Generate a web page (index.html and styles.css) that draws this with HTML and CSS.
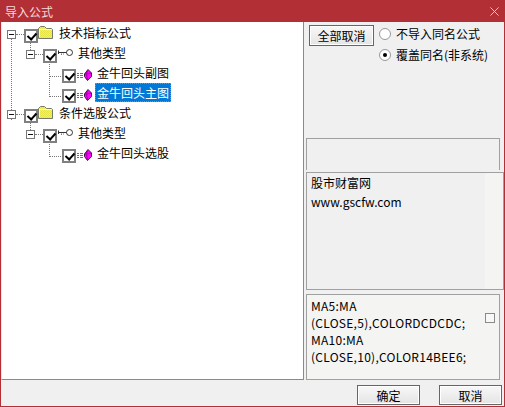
FILE: index.html
```html
<!DOCTYPE html>
<html lang="zh">
<head>
<meta charset="utf-8">
<title>导入公式</title>
<link rel="stylesheet" href="styles.css">
</head>
<body>
<svg class="defs" width="0" height="0" aria-hidden="true">
  <defs>
    <pattern id="dither" width="2" height="2" patternUnits="userSpaceOnUse">
      <rect width="2" height="2" fill="#ffff00"/>
      <rect width="1" height="1" fill="#e4e448"/>
      <rect x="1" y="1" width="1" height="1" fill="#e4e448"/>
    </pattern>
  </defs>
  <symbol id="folder" viewBox="0 0 15 13">
    <path d="M.5 12.5V2.5L2.5 .5H6.5L8.5 2.5H13.5L14.5 3.5V12.5Z" fill="url(#dither)" stroke="#77776a"/>
    <path d="M1.5 3.5H13.5M1.5 3V11" stroke="#fffde0"/>
  </symbol>
  <symbol id="key" viewBox="0 0 15 9">
    <path d="M0.5 2.5V6M0.5 4.5H9" stroke="#333" fill="none"/>
    <path d="M3.5 5.5V7M5.5 5.5V6.5" stroke="#777" fill="none"/>
    <circle cx="11.5" cy="4.5" r="3" fill="#fff" stroke="#333"/>
  </symbol>
  <symbol id="gem" viewBox="0 0 15 12">
    <path d="M0 4.5H2M3 4.5H6M0 6.5H2M3 6.5H6M0 8.5H2M3 8.5H6" stroke="#6e6e6e" fill="none"/>
    <path d="M11 .5L14.5 4V7.5L10.5 11.5L7.5 7.5V5Z" fill="#f0f" stroke="#401040"/>
    <path d="M10.5 1.5L9.5 5L10.5 11M8 5L9.5 5L14 4" stroke="#a000a0" fill="none"/>
  </symbol>
</svg>
<div class="window">
  <header class="titlebar">
    <span class="title">导入公式</span>
    <svg class="close" viewBox="0 0 10 10" aria-hidden="true"><path d="M.5 .5L9.5 9.5M9.5 .5L.5 9.5"/></svg>
  </header>
  <div class="body">
    <div class="main">
      <ul class="tree">
        <li class="row lvl0 root">
          <span class="exp"></span><span class="check"></span>
          <svg class="ic-folder"><use href="#folder"/></svg>
          <span class="label">技术指标公式</span>
        </li>
        <li class="row lvl1 branch first-branch">
          <span class="exp"></span><span class="check"></span>
          <svg class="ic-key"><use href="#key"/></svg>
          <span class="label">其他类型</span>
        </li>
        <li class="row lvl2 leaf">
          <span class="check"></span>
          <svg class="ic-gem"><use href="#gem"/></svg>
          <span class="label">金牛回头副图</span>
        </li>
        <li class="row lvl2 leaf">
          <span class="check"></span>
          <svg class="ic-gem"><use href="#gem"/></svg>
          <span class="label selected">金牛回头主图</span>
        </li>
        <li class="row lvl0 root">
          <span class="exp"></span><span class="check"></span>
          <svg class="ic-folder"><use href="#folder"/></svg>
          <span class="label">条件选股公式</span>
        </li>
        <li class="row lvl1 branch">
          <span class="exp"></span><span class="check"></span>
          <svg class="ic-key"><use href="#key"/></svg>
          <span class="label">其他类型</span>
        </li>
        <li class="row lvl2 leaf">
          <span class="check"></span>
          <svg class="ic-gem"><use href="#gem"/></svg>
          <span class="label">金牛回头选股</span>
        </li>
      </ul>
      <aside class="side">
        <div class="options">
          <button class="btn btn-all" type="button">全部取消</button>
          <div class="radios">
            <label class="radio"><span class="dot"></span>不导入同名公式</label>
            <label class="radio on"><span class="dot"></span>覆盖同名(非系统)</label>
          </div>
        </div>
        <div class="box-empty"></div>
        <div class="box-info">股市财富网<br>www.gscfw.com</div>
        <div class="box-code">
          <p class="code">MA5:MA<br>(CLOSE,5),COLORDCDCDC;<br>MA10:MA<br>(CLOSE,10),COLOR14BEE6;</p>
          <span class="small-check"></span>
        </div>
      </aside>
    </div>
    <footer class="footer">
      <button class="btn btn-foot" type="button">确定</button>
      <button class="btn btn-foot" type="button">取消</button>
    </footer>
  </div>
</div>
</body>
</html>
```

FILE: styles.css
```css
* { box-sizing: border-box; }
html, body { margin: 0; padding: 0; }
body {
  width: 505px;
  height: 407px;
  overflow: hidden;
  font: 12px/17px "Noto Sans CJK SC", "Liberation Sans", sans-serif;
  color: #000;
  background: #f0f0f0;
}
.defs { position: absolute; }
.window {
  width: 505px;
  height: 407px;
  display: flex;
  flex-direction: column;
  background: #f0f0f0;
  border: 1px solid #b23035;
  border-top: 0;
}
.titlebar {
  height: 22px;
  flex: none;
  margin: 0 -1px;
  background: #b23035;
  display: flex;
  align-items: center;
  justify-content: space-between;
  padding: 0 4px 0 5px;
}
.title { color: #f3d9da; font-size: 12px; }
.close { width: 9px; height: 9px; margin-right: 2px; }
.close path { stroke: #f0d5d6; stroke-width: 1; fill: none; }
.body { flex: 1; display: flex; flex-direction: column; min-height: 0; }
.main { height: 358px; display: flex; flex: none; }
.tree {
  width: 303px;
  margin: 0;
  padding: 2px 0 0;
  list-style: none;
  background: #fff;
  border: 1px solid #8a8a8a;
  border-top: 0;
  border-left: 1px solid #e8e8e8;
  flex: none;
}
.row {
  position: relative;
  height: 20px;
  display: flex;
  align-items: center;
  color: #000;
}
.lvl0 { padding-left: 22px; }
.lvl1 { padding-left: 41px; }
.lvl2 { padding-left: 60px; }
.exp {
  position: absolute;
  top: 6px;
  width: 9px;
  height: 9px;
  border: 1px solid #777;
  background: #fff;
}
.exp::after {
  content: "";
  position: absolute;
  left: 1px;
  right: 1px;
  top: 3px;
  height: 1px;
  background: #111;
}
.lvl0 .exp { left: 5px; }
.lvl1 .exp { left: 24px; }
.check {
  position: relative;
  width: 14px;
  height: 14px;
  margin-top: 4px;
  flex: none;
  border: 2px solid #808080;
  background: #fff;
  z-index: 1;
}
.check::after {
  content: "";
  position: absolute;
  left: 3px;
  top: 0;
  width: 4px;
  height: 7px;
  border: solid #000;
  border-width: 0 2px 2px 0;
  transform: rotate(42deg);
}
/* tree connectors */
.row::before {
  content: "";
  position: absolute;
  border-style: dotted;
  border-color: #777;
  border-width: 0;
}
.lvl0::before {
  left: 14px;
  width: 8px;
  top: 10px;
  height: 0;
  border-top-width: 1px;
}
.lvl1::before {
  left: 33px;
  width: 8px;
  top: 10px;
  height: 0;
  border-top-width: 1px;
}
.lvl2::before {
  left: 47px;
  width: 13px;
  top: -10px;
  height: 22px;
  border-left-width: 1px;
  border-bottom-width: 1px;
}
.lvl0.root:first-child::after {
  content: "";
  position: absolute;
  left: 9px;
  top: 15px;
  height: 81px;
  border-left: 1px dotted #777;
}
.lvl1::after {
  content: "";
  position: absolute;
  left: 28px;
  top: -1px;
  height: 7px;
  border-left: 1px dotted #777;
}
.ic-folder { width: 15px; height: 13px; margin: -3px 0 0 0; flex: none; }
.ic-key { width: 15px; height: 9px; margin: -3px 0 0 1px; flex: none; }
.ic-gem { width: 15px; height: 12px; margin: 2px 0 0 1px; flex: none; }
.label { padding: 0 2px; white-space: nowrap; }
.lvl0 .label { margin: -4px 0 0 4px; }
.lvl1 .label { margin: -4px 0 0 3px; }
.lvl2 .label { margin: -3px 0 0 3px; }
.selected {
  background: #0078d7;
  color: #fff;
  outline: 1px dotted #d08030;
  outline-offset: -1px;
  line-height: 19px;
}
.side {
  flex: 1;
  min-width: 0;
  display: flex;
  flex-direction: column;
  padding: 3px 0 0 2px;
}
.options {
  height: 113px;
  flex: none;
  display: flex;
  align-items: flex-start;
  padding-left: 3px;
}
.btn {
  font: inherit;
  color: #000;
  padding: 0;
  background: linear-gradient(#f8f8f8, #e4e4e4);
  border: 1px solid #666;
  box-shadow: inset 0 0 0 1px #fff;
}
.btn-all { width: 65px; height: 21px; }
.radios {
  display: flex;
  flex-direction: column;
  gap: 4px;
  margin: 0 0 0 5px;
}
.radio {
  display: flex;
  align-items: center;
  height: 17px;
  gap: 5px;
  color: #000;
}
.dot {
  width: 12px;
  height: 12px;
  flex: none;
  border-radius: 50%;
  border: 1px solid #999;
  background: #fff;
  position: relative;
}
.on .dot::after {
  content: "";
  position: absolute;
  left: 3px;
  top: 3px;
  width: 4px;
  height: 4px;
  border-radius: 50%;
  background: #000;
}
.box-empty {
  height: 32px;
  width: 194px;
  flex: none;
  border: 1px solid #a0a0a0;
  border-bottom: 0;
  background: #f0f0f0;
}
.box-info {
  width: 198px;
  height: 118px;
  flex: none;
  margin-top: 2px;
  border: 1px solid #a0a0a0;
  padding: 0 4px;
  background: linear-gradient(90deg, #f0f0f0 0, #f0f0f0 178px, #f4f4f2 178px);
  line-height: 19px;
  color: #000;
}
.box-code {
  width: 194px;
  height: 86px;
  flex: none;
  margin-top: 4px;
  border: 1px solid #a0a0a0;
  background: #f4f4f2;
  display: flex;
  padding: 2px 0 0 4px;
}
.code {
  margin: 0;
  width: 174px;
  letter-spacing: 0.27px;
  line-height: 17px;
  color: #000;
  white-space: nowrap;
}
.small-check {
  width: 10px;
  height: 10px;
  margin: 16px 0 0 0;
  flex: none;
  border: 1px solid #8a8a8a;
  background: #f8f8f8;
}
.footer {
  flex: 1;
  display: flex;
  justify-content: flex-end;
  gap: 19px;
  padding: 5px 2px 0 0;
}
.btn-foot { width: 63px; height: 20px; }
```
